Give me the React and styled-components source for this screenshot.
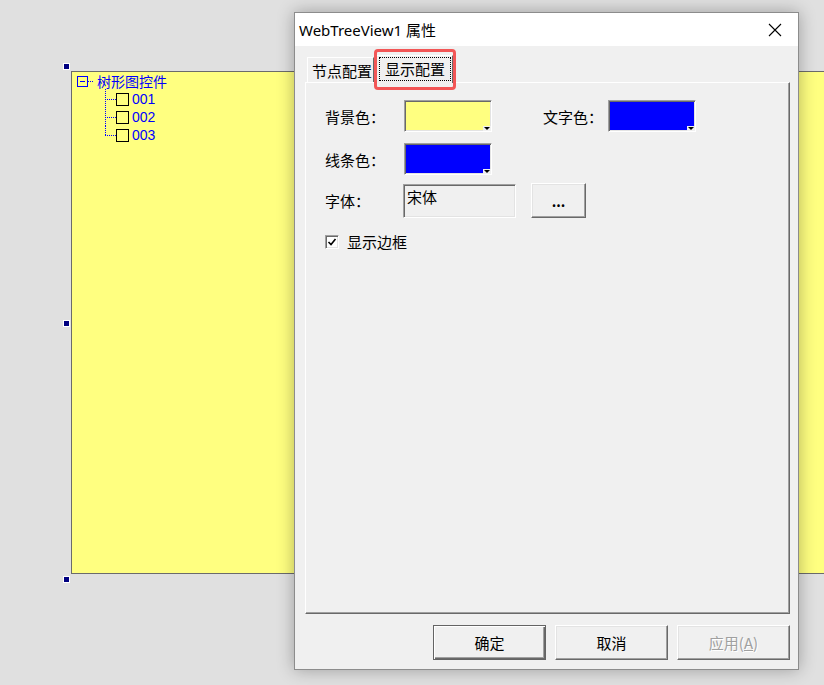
import React from 'react';
import styled, { createGlobalStyle, css } from 'styled-components';

const GlobalStyle = createGlobalStyle`
  html, body {
    margin: 0;
    padding: 0;
  }
  body {
    font-family: "Noto Sans CJK SC", "Noto Sans", sans-serif;
    background: #e0e0e0;
  }
`;

const raised = css`
  border: 1px solid;
  border-color: #ffffff #696969 #696969 #ffffff;
  box-shadow: inset -1px -1px #a0a0a0, inset 1px 1px #e3e3e3;
`;

const sunken = css`
  border: 1px solid;
  border-color: #a0a0a0 #ffffff #ffffff #a0a0a0;
  box-shadow: inset 1px 1px #696969, inset -1px -1px #e3e3e3;
`;

const colorRows = [
  [
    { label: '背景色：', color: '#ffff80' },
    { label: '文字色：', color: '#0000ff' },
  ],
  [{ label: '线条色：', color: '#0000ff' }],
];

const treeItems = ['001', '002', '003'];

const CloseIcon = () => (
  <svg width="14" height="14" viewBox="0 0 14 14">
    <path d="M1 1 L13 13 M13 1 L1 13" stroke="#000" strokeWidth="1.1" fill="none" />
  </svg>
);

const CheckMark = () => (
  <svg width="10" height="10" viewBox="0 0 10 10">
    <path d="M1.5 5 L4 7.5 L8.5 2" stroke="#000" strokeWidth="1.6" fill="none" />
  </svg>
);

const App = () => (
  <Desktop>
    <GlobalStyle />

    <DesignControl>
      <Handle $pos="top" />
      <Handle $pos="middle" />
      <Handle $pos="bottom" />
      <Tree>
        <RootRow>
          <Expander />
          <RootDots />
          <span>树形图控件</span>
        </RootRow>
        {treeItems.map((item, i) => (
          <ChildRow key={item}>
            <Connector $last={i === treeItems.length - 1} />
            <NodeCheck />
            <NodeText>{item}</NodeText>
          </ChildRow>
        ))}
      </Tree>
    </DesignControl>

    <Dialog>
      <TitleBar>
        <Title>WebTreeView1 属性</Title>
        <CloseButton>
          <CloseIcon />
        </CloseButton>
      </TitleBar>

      <DialogBody>
        <TabStrip>
          <Tab>节点配置</Tab>
          <Tab $active>
            <FocusText>显示配置</FocusText>
            <Highlight />
          </Tab>
        </TabStrip>

        <TabPanel>
          {colorRows.map((row, r) => (
            <FormRow key={r} $top={r === 0 ? 0 : 11}>
              {row.map((field, c) => (
                <Field key={field.label} $second={c === 1}>
                  <Label $wide={c === 1 ? 65 : 79}>{field.label}</Label>
                  <Swatch>
                    <SwatchFill style={{ background: field.color }} />
                  </Swatch>
                </Field>
              ))}
            </FormRow>
          ))}

          <FormRow $top={8}>
            <Field>
              <Label $wide={78}>字体：</Label>
              <FontBox>宋体</FontBox>
              <DotsButton>...</DotsButton>
            </Field>
          </FormRow>

          <CheckRow>
            <CheckBox>
              <CheckMark />
            </CheckBox>
            <span>显示边框</span>
          </CheckRow>
        </TabPanel>

        <ButtonRow>
          <Button $default>确定</Button>
          <Button>取消</Button>
          <Button disabled>
            应用(<u>A</u>)
          </Button>
        </ButtonRow>
      </DialogBody>
    </Dialog>
  </Desktop>
);

export default App;

const Desktop = styled.div`
  position: relative;
  width: 824px;
  height: 685px;
  overflow: hidden;
  background: #e0e0e0;
`;

const DesignControl = styled.div`
  position: absolute;
  left: 71px;
  top: 71px;
  width: 900px;
  height: 503px;
  box-sizing: border-box;
  border: 1px solid #6b6b6b;
  background: #ffff80;
`;

const Handle = styled.div`
  position: absolute;
  left: -9px;
  width: 7px;
  height: 7px;
  box-sizing: border-box;
  border: 1px solid #ffffff;
  background: #000080;
  ${props => props.$pos === 'top' && 'top: -9px;'}
  ${props => props.$pos === 'middle' && 'top: calc(50% - 3px);'}
  ${props => props.$pos === 'bottom' && 'bottom: -10px;'}
`;

const Tree = styled.div`
  padding-left: 5px;
  color: #0000ff;
  font-size: 14px;
  line-height: 18px;
`;

const RootRow = styled.div`
  display: flex;
  align-items: center;
  height: 18px;
`;

const Expander = styled.span`
  position: relative;
  width: 11px;
  height: 11px;
  box-sizing: border-box;
  border: 1px solid #0000ff;

  &::after {
    content: '';
    position: absolute;
    left: 2px;
    right: 2px;
    top: 4px;
    border-top: 1px solid #0000ff;
  }
`;

const RootDots = styled.span`
  width: 5px;
  margin-right: 4px;
  border-top: 1px dotted #0000ff;
`;

const ChildRow = styled.div`
  display: flex;
  align-items: center;
  height: 18px;
  margin-left: 28px;
`;

const Connector = styled.span`
  position: relative;
  align-self: stretch;
  width: 11px;

  &::before {
    content: '';
    position: absolute;
    left: 0;
    top: -1px;
    height: ${props => (props.$last ? '10px' : '19px')};
    border-left: 1px dotted #0000ff;
  }

  &::after {
    content: '';
    position: absolute;
    left: 0;
    right: 0;
    top: 9px;
    border-top: 1px dotted #0000ff;
  }
`;

const NodeCheck = styled.span`
  width: 13px;
  height: 13px;
  box-sizing: border-box;
  border: 1px solid #000000;
  margin-right: 3px;
`;

const NodeText = styled.span`
  font-family: "Liberation Sans", "Noto Sans CJK SC", sans-serif;
  font-size: 14px;
`;

const Dialog = styled.div`
  position: absolute;
  left: 294px;
  top: 12px;
  width: 505px;
  height: 658px;
  box-sizing: border-box;
  display: flex;
  flex-direction: column;
  border: 1px solid #8c8c8c;
  background: #f0f0f0;
  box-shadow: 0 0 16px rgba(0, 0, 0, 0.3);
`;

const TitleBar = styled.div`
  display: flex;
  align-items: center;
  justify-content: space-between;
  height: 33px;
  background: #ffffff;
  padding-left: 4px;
`;

const Title = styled.span`
  font-family: "Noto Sans", "Noto Sans CJK SC", sans-serif;
  font-size: 15px;
  color: #000;
`;

const CloseButton = styled.span`
  display: flex;
  align-items: center;
  justify-content: center;
  width: 46px;
  height: 33px;
`;

const DialogBody = styled.div`
  flex: 1;
  display: flex;
  flex-direction: column;
  padding: 11px 8px 9px 10px;
  font-size: 15px;
  color: #000;
`;

const TabStrip = styled.div`
  display: flex;
  align-items: flex-end;
  height: 25px;
  padding-left: 2px;
  position: relative;
  z-index: 1;
`;

const Tab = styled.div`
  position: relative;
  display: flex;
  align-items: center;
  box-sizing: border-box;
  height: 25px;
  padding: 0 1px 0 4px;
  border: 1px solid;
  border-bottom: none;
  border-color: #ffffff #696969 transparent #ffffff;
  background: #f0f0f0;

  ${props =>
    props.$active &&
    css`
      height: 28px;
      margin-bottom: -1px;
      margin-left: 2px;
      padding: 0 2px 2px 3px;
    `}
`;

const FocusText = styled.span`
  padding: 0 5px;
  line-height: 22px;
  outline: 1px dotted #000;
`;

const Highlight = styled.span`
  position: absolute;
  left: -3px;
  right: -4px;
  top: -7px;
  bottom: -7px;
  border: 3px solid #f25656;
  border-radius: 4px;
  pointer-events: none;
`;

const TabPanel = styled.div`
  flex: 1;
  display: flex;
  flex-direction: column;
  padding: 17px 0 0 19px;
  border: 1px solid;
  border-color: #ffffff #696969 #696969 #ffffff;
  box-shadow: inset -1px -1px #a0a0a0;
`;

const FormRow = styled.div`
  display: flex;
  margin-top: ${props => props.$top}px;
`;

const Field = styled.div`
  display: flex;
  align-items: center;
  margin-left: ${props => (props.$second ? '51px' : '0')};
`;

const Label = styled.span`
  width: ${props => props.$wide}px;
  white-space: nowrap;
`;

const Swatch = styled.div`
  position: relative;
  width: 88px;
  height: 32px;
  box-sizing: border-box;
  ${sunken};
  padding: 1px;

  &::after {
    content: '';
    position: absolute;
    right: 0;
    bottom: 0;
    width: 8px;
    height: 5px;
    background: #f0f0f0;
  }

  &::before {
    content: '';
    position: absolute;
    right: 1px;
    bottom: 1px;
    z-index: 1;
    border-left: 3px solid transparent;
    border-right: 3px solid transparent;
    border-top: 3px solid #000;
  }
`;

const SwatchFill = styled.div`
  width: 100%;
  height: 100%;
`;

const FontBox = styled.div`
  width: 113px;
  height: 34px;
  box-sizing: border-box;
  ${sunken};
  padding: 1px 3px;
  line-height: 22px;
`;

const DotsButton = styled.div`
  display: flex;
  align-items: center;
  justify-content: center;
  width: 55px;
  height: 35px;
  box-sizing: border-box;
  margin-left: 15px;
  ${raised};
  font-size: 14px;
  font-weight: bold;
`;

const CheckRow = styled.div`
  display: flex;
  align-items: center;
  gap: 8px;
  margin-top: 13px;
`;

const CheckBox = styled.span`
  display: flex;
  align-items: center;
  justify-content: center;
  width: 14px;
  height: 14px;
  box-sizing: border-box;
  background: #ffffff;
  ${sunken};
`;

const ButtonRow = styled.div`
  display: flex;
  justify-content: flex-end;
  gap: 9px;
  margin-top: 11px;
`;

const Button = styled.button`
  width: 113px;
  height: 35px;
  box-sizing: border-box;
  margin: 0;
  padding: 0;
  font-family: "Noto Sans CJK SC", "Noto Sans", sans-serif;
  font-size: 15px;
  color: #000;
  background: #f0f0f0;
  ${raised};

  ${props =>
    props.$default &&
    css`
      border: 1px solid #646464;
      box-shadow: inset 1px 1px #ffffff, inset -1px -1px #696969, inset -2px -2px #a0a0a0;
    `}

  &:disabled {
    color: #a0a0a0;
    text-shadow: 1px 1px #ffffff;
  }
`;
